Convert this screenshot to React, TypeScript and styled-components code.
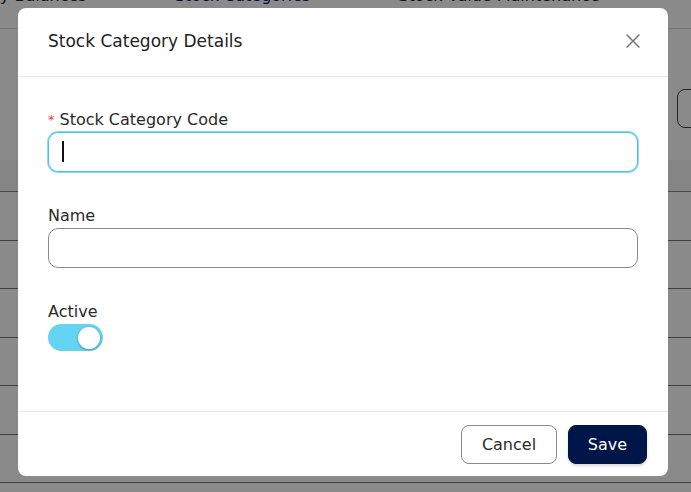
import styled, { createGlobalStyle } from 'styled-components';

const GlobalStyle = createGlobalStyle`
  html, body {
    margin: 0;
    padding: 0;
    overflow: hidden;
  }
  body {
    font-family: 'DejaVu Sans', 'Open Sans', sans-serif;
    background: #ffffff;
    color: #222;
  }
  * { box-sizing: border-box; }
`;

const Page = styled.div`
  width: 691px;
  height: 492px;
  overflow: hidden;
  position: relative;
  background: #fff;
`;

// page is scrolled a little, so the tab labels peek in at the top
const Tabs = styled.div`
  display: flex;
  gap: 88px;
  height: 43px;
  margin-top: -14px;
  padding: 0;
  border-bottom: 1px solid #d6d6d6;
  font-size: 16px;
  line-height: 20px;
`;

const Tab = styled.div<{ $active?: boolean }>`
  color: ${(p) => (p.$active ? '#001a66' : '#222')};
  white-space: nowrap;
`;

const Toolbar = styled.div`
  height: 131px;
  display: flex;
  justify-content: flex-end;
  align-items: flex-start;
  padding-top: 60px;
`;

const GhostButton = styled.div`
  width: 40px;
  height: 39px;
  margin-right: -26px;
  border: 1px solid #444;
  border-radius: 8px;
`;

const TableHead = styled.div`
  height: 32px;
  background: #f4f4f4;
  border-bottom: 1px solid #888;
`;

const TableRow = styled.div`
  height: 48.5px;
  border-bottom: 1px solid #777;
`;

const Overlay = styled.div`
  position: absolute;
  inset: 0;
  background: rgba(0, 0, 0, 0.46);
  display: flex;
  justify-content: center;
  align-items: flex-start;
  padding: 8px 5px 0 0;
`;

const Modal = styled.div`
  width: 650px;
  height: 468px;
  background: #fff;
  border-radius: 8px;
  display: flex;
  flex-direction: column;
`;

const Header = styled.div`
  height: 69px;
  display: flex;
  align-items: center;
  justify-content: space-between;
  padding: 0 26px 2px 30px;
  border-bottom: 1px solid #ececec;
`;

const Title = styled.h2`
  margin: 0;
  font-size: 17px;
  font-weight: 500;
  color: #222;
`;

const CloseButton = styled.button`
  border: none;
  background: none;
  padding: 0;
  width: 18px;
  height: 18px;
  display: flex;
  align-items: center;
  justify-content: center;
  cursor: pointer;
`;

const Body = styled.div`
  flex: 1;
  padding: 31px 30px 0 30px;
  display: flex;
  flex-direction: column;
`;

const Field = styled.div`
  display: flex;
  flex-direction: column;
  gap: 2px;
  margin-bottom: 32px;
`;

const Label = styled.label`
  font-size: 16px;
  color: #2a2a2a;
  line-height: 20px;
  padding-top: 2px;
  display: flex;
  align-items: center;
  gap: 5px;
`;

const Required = styled.span`
  color: #e0453a;
  font-size: 13px;
`;

const InputWrap = styled.div`
  position: relative;
`;

const Input = styled.input<{ $focused?: boolean }>`
  width: 100%;
  height: 40px;
  border-radius: 10px;
  border: 1px solid ${(p) => (p.$focused ? '#47c3e6' : '#8a8a8a')};
  box-shadow: ${(p) => (p.$focused ? '0 0 0 1px #8ddcf2' : 'none')};
  padding: 0 14px;
  font-size: 15px;
  font-family: inherit;
  outline: none;
  background: #fff;
`;

const Caret = styled.span`
  position: absolute;
  left: 14px;
  top: 9px;
  width: 2px;
  height: 21px;
  background: #111;
`;

const SwitchTrack = styled.div<{ $on: boolean }>`
  width: 55px;
  height: 27px;
  border-radius: 14px;
  background: ${(p) => (p.$on ? '#65d4f2' : '#ccc')};
  display: flex;
  align-items: center;
  justify-content: ${(p) => (p.$on ? 'flex-end' : 'flex-start')};
  padding: 0 3px;
`;

const SwitchKnob = styled.div`
  width: 22px;
  height: 22px;
  border-radius: 50%;
  background: #fff;
  box-shadow: 0 1px 3px rgba(0, 0, 0, 0.3);
`;

const Footer = styled.div`
  height: 65px;
  border-top: 1px solid #ececec;
  display: flex;
  justify-content: flex-end;
  align-items: center;
  gap: 11px;
  padding: 1px 21px 0 0;
`;

const Button = styled.button<{ $primary?: boolean }>`
  height: 39px;
  padding: 0 12px;
  min-width: ${(p) => (p.$primary ? '79px' : '96px')};
  border-radius: 8px;
  font-family: inherit;
  font-size: 16px;
  font-weight: ${(p) => (p.$primary ? 500 : 400)};
  border: 1px solid ${(p) => (p.$primary ? '#001648' : '#8a8a8a')};
  background: ${(p) => (p.$primary ? '#001648' : '#fff')};
  color: ${(p) => (p.$primary ? '#fff' : '#2a2a2a')};
  box-shadow: ${(p) => (p.$primary ? '0 2px 3px rgba(0,0,0,0.15)' : 'none')};
  cursor: pointer;
`;

export default function App() {
  return (
    <>
      <GlobalStyle />
      <Page>
        <Tabs>
          <Tab>y Balances</Tab>
          <Tab $active>Stock Categories</Tab>
          <Tab>Stock Value Maintenance</Tab>
        </Tabs>
        <Toolbar>
          <GhostButton />
        </Toolbar>
        <TableHead />
        {[0, 1, 2, 3, 4, 5].map((i) => (
          <TableRow key={i} />
        ))}
        <Overlay>
          <Modal>
            <Header>
              <Title>Stock Category Details</Title>
              <CloseButton aria-label="Close">
                <svg width="16" height="16" viewBox="0 0 16 16">
                  <path d="M2 2 L14 14 M14 2 L2 14" stroke="#777" strokeWidth="1.5" strokeLinecap="round" />
                </svg>
              </CloseButton>
            </Header>
            <Body>
              <Field>
                <Label>
                  <Required>*</Required>Stock Category Code
                </Label>
                <InputWrap>
                  <Input $focused />
                  <Caret />
                </InputWrap>
              </Field>
              <Field>
                <Label>Name</Label>
                <Input />
              </Field>
              <Field>
                <Label>Active</Label>
                <SwitchTrack $on>
                  <SwitchKnob />
                </SwitchTrack>
              </Field>
            </Body>
            <Footer>
              <Button>Cancel</Button>
              <Button $primary>Save</Button>
            </Footer>
          </Modal>
        </Overlay>
      </Page>
    </>
  );
}
